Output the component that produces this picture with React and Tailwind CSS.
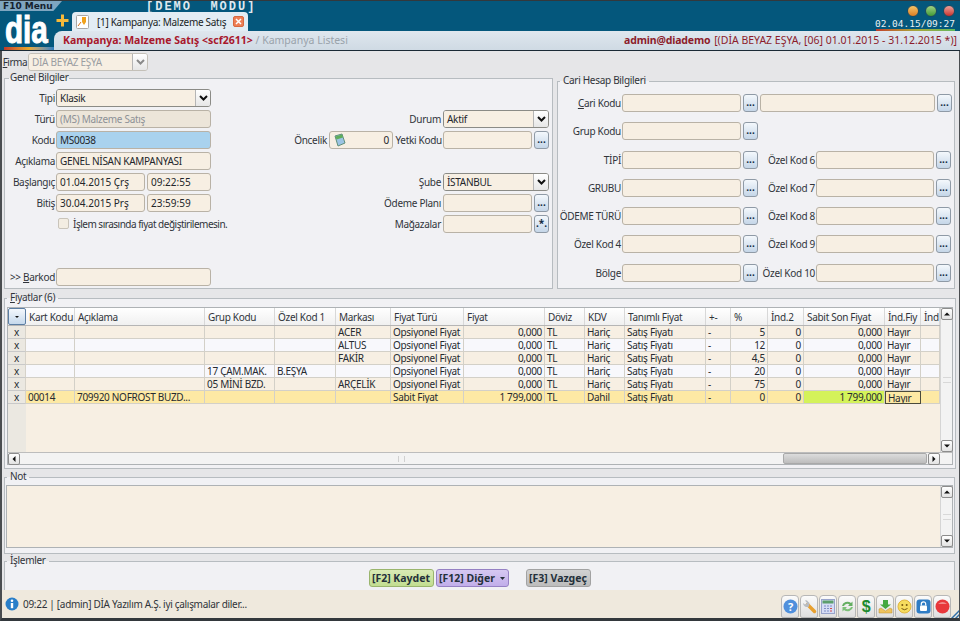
import React from "react";

const rowGrid =
  "grid grid-cols-[18px_49px_130px_70px_61px_55px_73px_81px_40px_40px_81px_25px_37px_36px_81px_36px_19px]";

const columns = ["", "Kart Kodu", "Açıklama", "Grup Kodu", "Özel Kod 1", "Markası", "Fiyat Türü", "Fiyat", "Döviz", "KDV", "Tanımlı Fiyat", "+-", "%", "İnd.2", "Sabit Son Fiyat", "İnd.Fiy", "İnd"];

const rows = [
  { grup: "", ozel: "", marka: "ACER", tur: "Opsiyonel Fiyat", fiyat: "0,000", kdv: "Hariç", yuzde: "5", sabit: "0,000" },
  { grup: "", ozel: "", marka: "ALTUS", tur: "Opsiyonel Fiyat", fiyat: "0,000", kdv: "Hariç", yuzde: "12", sabit: "0,000" },
  { grup: "", ozel: "", marka: "FAKİR", tur: "Opsiyonel Fiyat", fiyat: "0,000", kdv: "Hariç", yuzde: "4,5", sabit: "0,000" },
  { grup: "17 ÇAM.MAK.", ozel: "B.EŞYA", marka: "", tur: "Opsiyonel Fiyat", fiyat: "0,000", kdv: "Hariç", yuzde: "20", sabit: "0,000" },
  { grup: "05 MİNİ BZD.", ozel: "", marka: "ARÇELİK", tur: "Opsiyonel Fiyat", fiyat: "0,000", kdv: "Hariç", yuzde: "75", sabit: "0,000" },
  { kart: "00014", aciklama: "709920 NOFROST BUZD...", grup: "", ozel: "", marka: "", tur: "Sabit Fiyat", fiyat: "1 799,000", kdv: "Dahil", yuzde: "0", sabit: "1 799,000", selected: true },
];

const Input = ({ className = "w-[155px]", children, bg = "bg-[#f7efe3]" }) => (
  <div className={`h-[18px] shrink-0 flex items-center px-[3px] rounded-[3px] border border-[#b9b2a6] text-[#23262b] overflow-hidden whitespace-nowrap ${bg} ${className}`}>
    {children}
  </div>
);

const DotsButton = ({ label = "..." }) => (
  <div className="w-[15px] h-[18px] shrink-0 ml-[2px] rounded-[3px] border border-[#8f9aa6] bg-gradient-to-b from-[#f4f8fc] to-[#c5d6e8] flex items-center justify-center font-bold text-[#10283f] leading-none pb-[2px] tracking-normal">
    {label}
  </div>
);

const Select = ({ className, children, disabled }) => (
  <div className={`h-[18px] shrink-0 flex rounded-[3px] border overflow-hidden ${disabled ? "border-[#c4c0b8]" : "border-[#8b8b86]"} ${className}`}>
    <div className={`flex-1 flex items-center px-[3px] bg-[#f7efe3] whitespace-nowrap ${disabled ? "text-[#9a9da2]" : "text-[#23262b]"}`}>{children}</div>
    <div className="w-[15px] bg-gradient-to-b from-white to-[#e6e6e6] border-l border-[#b5b5b5] flex items-center justify-center">
      <svg width="9" height="6" viewBox="0 0 9 6"><path d="M1 1l3.500 3.500L8 1" fill="none" stroke={disabled ? "#8a8a8a" : "#111"} strokeWidth="2" /></svg>
    </div>
  </div>
);

const Label = ({ className = "", children }) => (
  <div className={`shrink-0 h-[18px] flex items-center justify-end pr-[1px] text-[#30343a] whitespace-pre ${className}`}>{children}</div>
);

const LeftRow = ({ label, children }) => (
  <div className="h-[21px] flex items-start">
    <Label className="w-[47px]">{label}</Label>
    {children}
  </div>
);

const RightRow = ({ children }) => <div className="h-[21px] flex items-start justify-end">{children}</div>;

const CariRow = ({ label, second, wide }) => (
  <div className="h-[28.3px] flex items-start">
    <Label className="w-[64px]">{label}</Label>
    <Input className="w-[119px]" />
    <DotsButton />
    {wide && <Input className="w-[175px] ml-[2px]" />}
    {wide && <DotsButton />}
    {second && <Label className="w-[58px]">{second}</Label>}
    {second && <Input className="w-[118px]" />}
    {second && <DotsButton />}
  </div>
);

const Arrow = ({ d }) => (
  <svg width="8" height="8" viewBox="0 0 8 8"><path d={d} fill="#111" /></svg>
);

const ScrollButton = ({ d }) => (
  <div className="w-[12px] h-[12px] shrink-0 rounded-[2px] border border-[#8c8c8c] bg-gradient-to-b from-white to-[#e3e3e3] flex items-center justify-center">
    <Arrow d={d} />
  </div>
);

const VScroll = ({ className = "" }) => (
  <div className={`w-[12px] shrink-0 flex flex-col justify-between items-center bg-[#f3f3f3] border-l border-[#d5d5d5] ${className}`}>
    <ScrollButton d="M1 5.500L4 2.500L7 5.500Z" />
    <div className="w-[8px] h-[6px] border-y border-[#d8d8d8]" />
    <ScrollButton d="M1 2.500L4 5.500L7 2.500Z" />
  </div>
);

const Light = ({ className }) => <div className={`w-[12px] h-[12px] rounded-full border border-[#1d4a60] ${className}`} />;

const ToolButton = ({ children }) => (
  <div className="w-[18px] h-[23px] rounded-t-[4px] rounded-b-[2px] border border-[#b7b7b7] bg-gradient-to-b from-[#fbfbfb] to-[#dfdfdf] flex items-center justify-center">
    {children}
  </div>
);

export default function App() {
  return (
    <div className="w-[960px] h-[621px] overflow-hidden flex flex-col bg-[#e6e6e8] text-[10px] tracking-[-0.3px] leading-none font-['Noto_Sans',sans-serif]">
      {/* ust bar */}
      <div className="h-[51px] shrink-0 flex bg-[#04577c] border-t border-[#33383c] border-b border-b-[#1b2a36]">
        <div className="w-[54px] shrink-0 flex flex-col">
          <div className="w-[62px] h-[10px] shrink-0 bg-[#7fa6c0] [clip-path:polygon(0_0,100%_0,86%_100%,0_100%)] text-[9px] tracking-normal leading-[10px] font-bold text-[#14222e] pl-[3px] whitespace-nowrap font-['DejaVu_Sans',sans-serif]">
            F10 Menu
          </div>
          <div className="h-[36px] shrink-0 pl-[5px] pt-[2px] overflow-hidden">
            <div className="text-white font-bold text-[38px] tracking-normal leading-[34px] origin-left scale-x-[0.78] [-webkit-text-stroke:1px_white] font-['Liberation_Sans',sans-serif]">dia</div>
          </div>
          <div className="ml-[4px] h-[3px] shrink-0 bg-gradient-to-r from-[#c0392b] via-[#e8a92a] to-[#2c7fc0]" />
        </div>
        <div className="flex-1 flex flex-col min-w-0">
          <div className="h-[11px] shrink-0 flex justify-between">
            <div className="pl-[92px] pt-[1px] text-[12px] leading-[11px] font-bold text-[#dfe8ee] tracking-[2px] whitespace-pre font-['Liberation_Mono',monospace]">[DEMO  MODU]</div>
            <div className="w-[48px] h-[16px] mr-[5px] flex justify-between pt-[4px]">
              <Light className="bg-gradient-to-b from-[#f2c566] to-[#dc7d20]" />
              <Light className="bg-gradient-to-b from-[#9ed283] to-[#3f9a35]" />
              <Light className="bg-gradient-to-b from-[#eb9f9a] to-[#c52c2c]" />
            </div>
          </div>
          <div className="h-[19px] shrink-0 flex justify-between">
            <div className="flex items-end">
              <svg width="13" height="13" viewBox="0 0 13 13" className="mb-[4px] ml-[2px] mr-[3px]">
                <path d="M5 0.500h3v4.500h4.500v3H8v4.500H5V8H0.500V5H5z" fill="#f5b93a" />
              </svg>
              <div className="w-[176px] h-[19px] rounded-t-[4px] bg-[#e3edf4] flex items-center pl-[3px] pr-[4px] text-[#1a1f25]">
                <svg width="16" height="16" viewBox="0 0 16 16" className="mr-[6px] shrink-0">
                  <rect x="1.500" y="1.500" width="12" height="13" rx="1" fill="#fff" stroke="#a8a8a8" />
                  <path d="M7 3h4v5l-2 3-2-3z" fill="#f0a21c" />
                  <path d="M3 12l3-4" stroke="#d9731a" />
                </svg>
                <span className="flex-1 whitespace-nowrap">[1] Kampanya: Malzeme Satış</span>
                <div className="w-[11px] h-[11px] shrink-0 rounded-[2px] bg-[#ee7f55] border border-[#d9683f] flex items-center justify-center">
                  <svg width="7" height="7" viewBox="0 0 7 7"><path d="M1 1l5 5M6 1L1 6" stroke="#fff" strokeWidth="1.500" /></svg>
                </div>
              </div>
            </div>
            <div className="pr-[5px] pt-[7px] flex flex-col items-end">
              <div className="text-[9.500px] tracking-normal leading-[10px] text-[#e8f0f4] font-['DejaVu_Sans_Mono',monospace]">02.04.15/09:27</div>
              <div className="w-[79px] h-[2px] bg-gradient-to-r from-[#c0392b] via-[#a5a53a] to-[#5cb85c]" />
            </div>
          </div>
          <div className="h-[19px] shrink-0 rounded-tl-[8px] bg-gradient-to-b from-[#dfe7ee] to-[#cfdae4] flex items-center justify-between pl-[9px] pr-[3px] text-[10.500px] tracking-normal">
            <div className="whitespace-nowrap">
              <span className="font-bold text-[#a8182c]">Kampanya: Malzeme Satış &lt;scf2611&gt;</span>
              <span className="text-[#9aa3ab]"> / Kampanya Listesi</span>
            </div>
            <div className="whitespace-nowrap text-[#8c1c2b]">
              <span className="font-bold tracking-[-0.15px] mr-[1px]">admin@diademo</span> [(DİA BEYAZ EŞYA, [06] 01.01.2015 - 31.12.2015 *)]
            </div>
          </div>
        </div>
      </div>

      {/* form alani */}
      <div className="flex-1 min-h-0 flex flex-col pl-[3px] pr-[4px] border-l-[2px] border-[#4a4d50] border-r-[1px] border-r-[#4a4d50]">
        <div className="h-[21px] shrink-0 pt-[2px] flex items-start">
          <Label className="w-[23px] tracking-[-0.5px]"><span className="underline">F</span>irma</Label>
          <Select disabled className="w-[120px]">DİA BEYAZ EŞYA</Select>
        </div>

        <div className="h-[217px] shrink-0 flex">
          <fieldset className="w-[549px] -ml-[1px] shrink-0 border border-[#b7bcc0] bg-[#f1f1f4] pl-[4px] pr-[2px] pt-[4px]">
            <legend className="ml-0 px-[1px] h-[13px] text-[#30343a]">Genel Bilgiler</legend>
            <div className="flex">
              <div className="w-[201px] shrink-0 flex flex-col">
                <LeftRow label="Tipi"><Select className="w-[155px]">Klasik</Select></LeftRow>
                <LeftRow label="Türü"><Input bg="bg-[#ece5d9]"><span className="text-[#8d9197]">(MS) Malzeme Satış</span></Input></LeftRow>
                <LeftRow label="Kodu"><Input bg="bg-[#a9d2ee]">MS0038</Input></LeftRow>
                <LeftRow label="Açıklama"><Input>GENEL NİSAN KAMPANYASI</Input></LeftRow>
                <LeftRow label="Başlangıç">
                  <Input className="w-[89px] tracking-normal">01.04.2015 Çrş</Input>
                  <Input className="w-[64px] ml-[2px] tracking-normal">09:22:55</Input>
                </LeftRow>
                <LeftRow label="Bitiş">
                  <Input className="w-[89px] tracking-normal">30.04.2015 Prş</Input>
                  <Input className="w-[64px] ml-[2px] tracking-normal">23:59:59</Input>
                </LeftRow>
                <div className="h-[53px] flex items-start pl-[49px] pt-[1px]">
                  <div className="w-[11px] h-[11px] shrink-0 mt-[2px] rounded-[2px] border border-[#c9c4ba] bg-[#f3ede2]" />
                  <span className="ml-[4px] mt-[3px] text-[#30343a] whitespace-nowrap tracking-[-0.5px]">İşlem sırasında fiyat değiştirilemesin.</span>
                </div>
                <LeftRow label={<><span>&gt;&gt; </span><span className="underline">B</span>arkod</>}><Input /></LeftRow>
              </div>
              <div className="flex-1 flex flex-col pr-[1px]">
                <div className="h-[21px]" />
                <RightRow><Label className="mr-[1px]">Durum</Label><Select className="w-[106px]">Aktif</Select></RightRow>
                <RightRow>
                  <Label className="mr-[1px]">Öncelik</Label>
                  <Input className="w-[64px] justify-between">
                    <svg width="13" height="14" viewBox="0 0 13 14"><path d="M2 3l7-2 3 9-7 3z" fill="#9cc4e4" stroke="#5f8f7a" /><path d="M2.500 3.500l6.500-2 1 3-6.500 2z" fill="#5fae5a" /></svg>
                    0
                  </Input>
                  <Label className="w-[50px]">Yetki Kodu</Label>
                  <Input className="w-[89px]" />
                  <DotsButton />
                </RightRow>
                <div className="h-[21px]" />
                <RightRow><Label className="mr-[1px]">Şube</Label><Select className="w-[106px]">İSTANBUL</Select></RightRow>
                <RightRow><Label className="mr-[1px]">Ödeme Planı</Label><Input className="w-[89px]" /><DotsButton /></RightRow>
                <RightRow><Label className="mr-[1px]">Mağazalar</Label><Input className="w-[89px]" /><DotsButton label=".*." /></RightRow>
              </div>
            </div>
          </fieldset>

          <fieldset className="w-[398px] ml-[4px] mt-[3px] shrink-0 border border-[#b7bcc0] bg-[#f1f1f4] pt-[6px]">
            <legend className="ml-[2px] px-[3px] h-[13px] text-[#30343a]">Cari Hesap Bilgileri</legend>
            <div className="flex flex-col">
              <CariRow label={<><span className="underline">C</span>ari Kodu</>} wide />
              <CariRow label="Grup Kodu" />
              <CariRow label="TİPİ" second="Özel Kod 6" />
              <CariRow label="GRUBU" second="Özel Kod 7" />
              <CariRow label="ÖDEME TÜRÜ" second="Özel Kod 8" />
              <CariRow label="Özel Kod 4" second="Özel Kod 9" />
              <CariRow label="Bölge" second="Özel Kod 10" />
            </div>
          </fieldset>
        </div>

        <fieldset className="h-[177px] mt-[3px] shrink-0 -ml-[1px] w-[951px] border border-[#b7bcc0] bg-[#f1f1f4] px-[2px] pt-[2px]">
          <legend className="ml-0 px-[3px] h-[13px] text-[#30343a]"><span className="underline">F</span>iyatlar (6)</legend>
          <div className="h-[158px] flex flex-col border border-[#aeb2b5]">
            <div className="flex-1 min-h-0 flex">
              <div className="w-[932px] shrink-0 flex flex-col bg-[#f7efe3]">
                <div className={`${rowGrid} h-[18px] shrink-0 bg-gradient-to-b from-white to-[#f0f0f0] border-b border-[#b5b5b5] text-[#30343a]`}>
                  {columns.map((c, i) =>
                    i === 0 ? (
                      <div key={i} className="rounded-[2px] border border-[#5c7ea3] bg-gradient-to-b from-[#f4f8fc] to-[#c6d9ec] flex items-center justify-center">
                        <Arrow d="M2 3L4 5L6 3Z" />
                      </div>
                    ) : (
                      <div key={i} className="flex items-center pl-[3px] border-r border-[#d8d8d8] whitespace-nowrap overflow-hidden">{c}</div>
                    )
                  )}
                </div>
                {rows.map((r, idx) => {
                  const bg = r.selected ? "bg-[#fde9a4]" : idx % 2 === 0 ? "bg-[#f7efe3]" : "bg-[#f8f8fc]";
                  const values = [r.kart, r.aciklama, r.grup, r.ozel, r.marka, r.tur, r.fiyat, "TL", r.kdv, "Satış Fiyatı", "-", r.yuzde, "0", r.sabit, "Hayır", ""];
                  const rightAligned = [6, 11, 12, 13];
                  return (
                    <div key={idx} className={`${rowGrid} h-[13px] shrink-0 ${bg} text-[#262a30]`}>
                      <div className="bg-[#ebe8e1] border-r border-[#d6d2c9] border-b border-b-[#c9c9c9] flex items-center justify-center">x</div>
                      {values.map((v, i) => (
                        <div
                          key={i}
                          className={`flex items-center px-[2px] whitespace-nowrap overflow-hidden ${rightAligned.includes(i) ? "justify-end" : ""} ${r.selected && i === 13 ? "bg-[#d4f25a]" : ""} ${r.selected && i === 14 ? "border border-[#4a4a3c]" : "border-r border-b border-[#d3d0c8]"}`}
                        >
                          {v}
                        </div>
                      ))}
                    </div>
                  );
                })}
                <div className="flex-1 flex"><div className="w-[18px] bg-[#ebe8e1]" /></div>
              </div>
              <VScroll />
            </div>
            <div className="h-[12px] shrink-0 flex bg-[#f3f3f3] border-t border-[#bdbdbd] pr-[12px]">
              <ScrollButton d="M5.500 1L2.500 4L5.500 7Z" />
              <div className="flex-1 flex">
                <div className="w-[763px] flex items-center justify-center">
                  <div className="w-[7px] h-[6px] border-x border-[#d0d0d0]" />
                </div>
                <div className="w-[144px] bg-gradient-to-b from-[#dcdcdc] to-[#bdbdbd] border border-[#a9a9a9] rounded-[2px]" />
              </div>
              <ScrollButton d="M2.500 1L5.500 4L2.500 7Z" />
            </div>
          </div>
        </fieldset>

        <fieldset className="h-[83px] mt-[2px] shrink-0 -ml-[1px] w-[951px] border border-[#b7bcc0] bg-[#f1f1f4] px-[1px] pt-[1px]">
          <legend className="ml-[1px] px-[3px] h-[13px] text-[#30343a]">Not</legend>
          <div className="h-[63px] flex border border-[#aeb2b5]">
            <div className="flex-1 bg-[#f7efe3]" />
            <VScroll />
          </div>
        </fieldset>

        <fieldset className="h-[36px] mt-[1px] shrink-0 -ml-[1px] w-[951px] border border-[#b7bcc0] bg-[#f1f1f4]">
          <legend className="ml-[2px] px-[3px] h-[13px] text-[#30343a]">İşlemler</legend>
          <div className="h-[20px] pt-[1px] flex justify-center items-start font-bold text-[#24303a] text-[10.500px] tracking-normal">
            <div className="w-[65px] h-[18px] rounded-[3px] border border-[#9ab56d] bg-gradient-to-b from-[#d9eab5] to-[#c2dd90] flex items-center justify-center">[F2] Kaydet</div>
            <div className="w-[73px] h-[18px] ml-[2px] rounded-[3px] border border-[#9681c4] bg-gradient-to-b from-[#d6c8f2] to-[#c1aeea] flex items-center justify-center gap-[5px]">
              [F12] Diğer
              <svg width="5" height="3" viewBox="0 0 5 3"><path d="M0 0h5L2.500 3z" fill="#24303a" /></svg>
            </div>
            <div className="w-[65px] h-[18px] ml-[17px] rounded-[3px] border border-[#a2a2a2] bg-gradient-to-b from-[#d2d2d2] to-[#bcbcbc] flex items-center justify-center">[F3] Vazgeç</div>
          </div>
        </fieldset>
      </div>

      {/* durum cubugu */}
      <div className="h-[31px] shrink-0 flex items-center justify-between bg-[#efe9dd] border-l-[2px] border-[#4a4d50] border-r-[1px] border-r-[#4a4d50] border-b-[3px] border-b-[#33383c] pl-[3px]">
        <div className="flex items-center gap-[4px] text-[#30343a]">
          <svg width="14" height="14" viewBox="0 0 14 14">
            <circle cx="7" cy="7" r="6.500" fill="#2a7fc9" />
            <circle cx="7" cy="3.800" r="1.300" fill="#fff" />
            <path d="M5.800 6h2.400v5.200H5.800z" fill="#fff" />
          </svg>
          09:22 | [admin] DİA Yazılım A.Ş. iyi çalışmalar diler...
        </div>
        <div className="flex self-end items-end">
          <div className="flex gap-[1px]">
            <ToolButton><svg width="15" height="15" viewBox="0 0 15 15"><circle cx="7.500" cy="7.500" r="7" fill="#4f8fdc" /><text x="7.500" y="11.500" textAnchor="middle" fontSize="11" fontWeight="700" fill="#fff">?</text></svg></ToolButton>
            <ToolButton><svg width="15" height="15" viewBox="0 0 15 15"><path d="M5.500 5.500L12.500 12.500" stroke="#e8a02e" strokeWidth="3.500" strokeLinecap="round" /><path d="M1 4a4 4 0 0 0 6 3.500L7.500 4 5 1.500A4 4 0 0 0 3 1.500L5 4 3 5.500z" fill="#b8bcc2" /></svg></ToolButton>
            <ToolButton><svg width="14" height="15" viewBox="0 0 14 15"><rect x="0.500" y="0.500" width="13" height="14" fill="#d5dcf5" stroke="#98a4cc" /><rect x="1.500" y="1.500" width="11" height="3" fill="#5c9e6c" /><path d="M3 7h2M6 7h2M9 7h2M3 9.500h2M6 9.500h2M3 12h2M6 12h2" stroke="#7f8fc4" /><path d="M9 9.500h2M9 12h2" stroke="#d24a4a" /></svg></ToolButton>
            <ToolButton><svg width="15" height="15" viewBox="0 0 15 15"><path d="M2 7a5.500 5 0 0 1 9-3l1.500-1.500V7H8l1.500-1.500A3.500 3 0 0 0 4 7z" fill="#64ae62" /><path d="M13 8a5.500 5 0 0 1-9 3l-1.500 1.500V8H7l-1.500 1.500A3.500 3 0 0 0 11 8z" fill="#7cc078" /></svg></ToolButton>
            <ToolButton><span className="text-[16px] leading-none font-bold text-[#1c8a2e] font-['Liberation_Sans',sans-serif]">$</span></ToolButton>
            <ToolButton><svg width="15" height="15" viewBox="0 0 15 15"><path d="M5 1h5v4.500h3L7.500 10 2 5.500h3z" fill="#45a83f" /><path d="M1 10l2-1 4.500 3L12 9l2 1v4H1z" fill="#eec35e" stroke="#b98f30" strokeWidth=".5" /></svg></ToolButton>
            <ToolButton><svg width="15" height="15" viewBox="0 0 15 15"><circle cx="7.500" cy="7.500" r="6.500" fill="#f6dc5e" stroke="#e2b63c" /><circle cx="5.300" cy="6" r="1" fill="#7a5a10" /><circle cx="9.700" cy="6" r="1" fill="#7a5a10" /><path d="M4.500 9.500q3 2.500 6 0" fill="none" stroke="#7a5a10" /></svg></ToolButton>
            <ToolButton><svg width="15" height="15" viewBox="0 0 15 15"><rect x="0.500" y="0.500" width="14" height="14" rx="3" fill="#2e7cc4" /><rect x="4" y="6.500" width="7" height="5.500" rx="1" fill="#fff" /><path d="M5.300 6.500V5a2.200 2.200 0 0 1 4.400 0v1.500" fill="none" stroke="#fff" strokeWidth="1.200" /></svg></ToolButton>
            <ToolButton><svg width="15" height="15" viewBox="0 0 15 15"><circle cx="7.500" cy="7.500" r="7" fill="#e8383c" /><path d="M3 5q4.500-4 9 0" fill="#f28a8a" /></svg></ToolButton>
          </div>
          <svg width="8" height="8" viewBox="0 0 8 8"><path d="M8 0L0 8h2L8 2zM8 4L4 8h2l2-2z" fill="#2f6fa8" /></svg>
        </div>
      </div>
    </div>
  );
}
